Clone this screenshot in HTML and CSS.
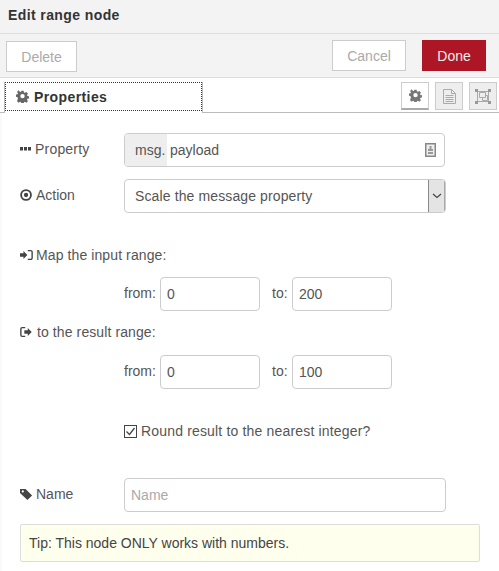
FILE: index.html
```html
<!DOCTYPE html>
<html lang="en">
<head>
<meta charset="utf-8">
<title>Edit range node</title>
<link rel="stylesheet" href="styles.css">
</head>
<body>
<div class="tray">
  <header class="titlebar">Edit range node</header>
  <div class="toolbar">
    <button class="btn btn-delete">Delete</button>
    <div class="toolbar-right">
      <button class="btn btn-cancel">Cancel</button>
      <button class="btn btn-done">Done</button>
    </div>
  </div>
  <div class="tabs">
    <div class="tab">
      <div class="tab-focus">
        <svg class="ico ico-tab" viewBox="0 0 16 16"><path fill="#666" fill-rule="evenodd" d="M6.600 1h2.800l.4 2 1.200.5 1.700-1.100 2 2-1.100 1.700.5 1.200 1.900.3v2.800l-1.900.4-.5 1.200 1.100 1.700-2 2-1.700-1.100-1.200.5-.4 1.900H6.600l-.4-1.900-1.200-.5-1.700 1.100-2-2L2.400 10l-.5-1.200L0 8.400V5.600l1.900-.3.5-1.200-1.100-1.700 2-2L5 2.500l1.200-.5zM8 4.800a2.700 2.700 0 1 0 0 5.400 2.700 2.700 0 0 0 0-5.400z"/></svg>
        <span>Properties</span>
      </div>
    </div>
    <div class="tab-icons">
      <div class="tabicon active">
        <svg class="ico ico-gear" viewBox="0 0 16 16"><path fill="#777" fill-rule="evenodd" d="M6.600 1h2.800l.4 2 1.200.5 1.700-1.100 2 2-1.100 1.700.5 1.200 1.900.3v2.800l-1.900.4-.5 1.200 1.100 1.700-2 2-1.700-1.100-1.200.5-.4 1.900H6.600l-.4-1.900-1.200-.5-1.700 1.100-2-2L2.400 10l-.5-1.200L0 8.400V5.600l1.900-.3.5-1.200-1.100-1.700 2-2L5 2.500l1.200-.5zM8 4.800a2.700 2.700 0 1 0 0 5.400 2.700 2.700 0 0 0 0-5.400z"/></svg>
      </div>
      <div class="tabicon">
        <svg class="ico ico-doc" viewBox="0 0 13 15"><path fill="#eee" stroke="#aaa" d="M.5.500h8l4 4v10H.5z"/><path fill="none" stroke="#aaa" d="M8.500.5v4h4M2.500 6.500h8M2.500 8.500h8M2.500 10.500h8M2.500 12.500h8"/></svg>
      </div>
      <div class="tabicon">
        <svg class="ico ico-focus" viewBox="0 0 16 15"><path fill="none" stroke="#aaa" d="M2.500 2.500h11v10h-11zM4.500 3.500h6v5h-6zM7.500 8.500v3h5v-5h-2"/><path fill="#999" d="M0 0h3v3H0zM13 0h3v3h-3zM0 12h3v3H0zM13 12h3v3h-3z"/></svg>
      </div>
    </div>
  </div>
  <main class="form">
    <div class="row">
      <label class="label label-property">
        <svg class="ico ico-dots" viewBox="0 0 11 4"><path fill="#444" d="M0 0h3v3.500H0zM4 0h3v3.500H4zM8 0h3v3.500H8z"/></svg>
        <span class="spaced">Property</span>
      </label>
      <div class="typed">
        <span class="typed-prefix">msg.</span>
        <span class="typed-value">payload</span>
        <svg class="typed-ico" viewBox="0 0 11 14"><rect x=".75" y=".75" width="9.500" height="12.500" fill="#eee" stroke="#888" stroke-width="1.500"/><path fill="#999" d="M4.500 3h2v3h1.500v2H3V6h1.500zM3 9h5v2H3z"/></svg>
      </div>
    </div>
    <div class="row row-action">
      <label class="label">
        <svg class="ico ico-label" viewBox="0 0 14 14"><circle cx="6.500" cy="7" r="5.300" fill="none" stroke="#444" stroke-width="2"/><circle cx="6.500" cy="7" r="2.300" fill="#444"/></svg>
        <span>Action</span>
      </label>
      <div class="select">
        <span class="select-text">Scale the message property</span>
        <span class="select-arrow"><svg viewBox="0 0 10 6" class="chevron"><path fill="none" stroke="#444" stroke-width="1.200" d="M1 1l4 3.500L9 1"/></svg></span>
      </div>
    </div>
    <div class="heading heading-input">
      <svg class="ico ico-label" viewBox="0 0 15 14"><path fill="#444" d="M0 5h4V2.500L8.500 7 4 11.500V9H0z"/><path fill="none" stroke="#444" stroke-width="1.600" d="M9 2h3.500a1.500 1.500 0 0 1 1.500 1.500v7a1.500 1.500 0 0 1-1.500 1.500H9"/></svg>
      <span>Map the input range:</span>
    </div>
    <div class="range range-input">
      <span class="range-from">from:</span><div class="input input-num">0</div>
      <span class="range-to">to:</span><div class="input input-num">200</div>
    </div>
    <div class="heading heading-result">
      <svg class="ico ico-label" viewBox="0 0 15 14"><path fill="none" stroke="#444" stroke-width="1.600" d="M6 2H2.500A1.500 1.500 0 0 0 1 3.500v7A1.500 1.500 0 0 0 2.500 12H6"/><path fill="#444" d="M5 5h4V2.500L13.500 7 9 11.500V9H5z"/></svg>
      <span>to the result range:</span>
    </div>
    <div class="range range-result">
      <span class="range-from">from:</span><div class="input input-num">0</div>
      <span class="range-to">to:</span><div class="input input-num">100</div>
    </div>
    <div class="check-row">
      <svg class="checkbox" viewBox="0 0 13 13"><rect x=".5" y=".5" width="12" height="12" fill="#fff" stroke="#444"/><path fill="none" stroke="#444" stroke-width="1.300" d="M2.500 6.500l3 3 5-6.500"/></svg>
      <span>Round result to the nearest integer?</span>
    </div>
    <div class="row row-name">
      <label class="label">
        <svg class="ico ico-label" viewBox="0 0 14 14"><path fill="#444" fill-rule="evenodd" d="M0 1.500h6l7 7-5 5-8-7.500zM3 3a1.200 1.200 0 1 0 0 2.400A1.200 1.200 0 0 0 3 3z"/></svg>
        <span>Name</span>
      </label>
      <div class="input input-name">Name</div>
    </div>
    <div class="tip">Tip: This node ONLY works with numbers.</div>
  </main>
</div>
</body>
</html>
```
FILE: styles.css
```css
* { box-sizing: border-box; }
html, body { margin: 0; height: 100%; }
body {
  font-family: "Liberation Sans", Arial, sans-serif;
  font-size: 14px;
  color: #555;
  background: #fff;
  overflow: hidden;
}
.tray { width: 499px; height: 571px; display: flex; flex-direction: column; }

.titlebar {
  height: 34px;
  padding: 7px 8px 0;
  font-weight: bold;
  color: #333;
  letter-spacing: .4px;
  background: #f3f3f3;
  border-bottom: 1px solid #ddd;
  line-height: 16px;
}
.toolbar {
  height: 44px;
  padding: 6px 13px 0 6px;
  display: flex;
  justify-content: space-between;
  align-items: flex-start;
  background: #f3f3f3;
  border-bottom: 1px solid #ddd;
}
.toolbar-right { display: flex; gap: 16px; }
.btn {
  font: inherit;
  height: 31px;
  padding: 0;
  border: 1px solid #ccc;
  background: #fff;
  color: #aaa;
}
.btn-delete { width: 71px; margin-top: 1px; }
.btn-cancel { width: 74px; }
.btn-done { width: 64px; background: #ad1625; border-color: #ad1625; color: #eee; }

.tabs {
  height: 35px;
  padding: 4px 2px 0 4px;
  display: flex;
  justify-content: space-between;
  border-bottom: 1px solid #bbb;
}
.tab {
  width: 199px;
  height: 31px;
  background: #fff;
  border-right: 1px solid #bbb;
  border-left: 1px solid #bbb;
}
.tab-focus {
  height: 29px;
  padding-left: 10px;
  display: flex;
  align-items: center;
  gap: 5px;
  font-weight: bold;
  letter-spacing: .4px;
  color: #333;
  border: 1px dotted #333;
}
.ico { display: block; flex: none; }
.ico-tab { width: 13px; height: 13px; }
.ico-gear { width: 13px; height: 13px; }
.ico-doc { width: 13px; height: 15px; }
.ico-focus { width: 16px; height: 15px; }
.tab-icons { display: flex; gap: 6px; align-items: flex-start; }
.tabicon {
  width: 28px;
  height: 28px;
  display: flex;
  align-items: center;
  justify-content: center;
  background: #eee;
  border: 1px solid #ccc;
}
.tabicon.active { background: #fff; border-bottom: 2px solid #aaa; }

.form {
  flex: 1;
  padding: 20px 0 0 18px;
  display: flex;
  flex-direction: column;
  background: #fff;
  border-left: 2px solid #fafafa;
}
.row { display: flex; align-items: center; }
.label { width: 104px; display: flex; align-items: center; gap: 3px; flex: none; margin-top: -2px; }
.label-property { gap: 4px; }
.spaced { letter-spacing: .2px; }
.ico-label { width: 13px; height: 14px; }
.ico-dots { width: 11px; height: 4px; }

.typed, .select, .input {
  border: 1px solid #ccc;
  border-radius: 4px;
  background: #fff;
}
.typed {
  width: 321px;
  height: 34px;
  display: flex;
  align-items: center;
  overflow: hidden;
}
.typed-prefix {
  width: 42px;
  height: 100%;
  padding-left: 10px;
  display: flex;
  align-items: center;
  background: #eee;
}
.typed-value { flex: 1; padding-left: 3px; }
.typed-ico { width: 11px; height: 14px; margin-right: 8px; }

.row-action { margin-top: 12px; }
.select {
  width: 322px;
  height: 34px;
  display: flex;
  overflow: hidden;
}
.select-text { flex: 1; padding-left: 10px; line-height: 32px; letter-spacing: .12px; }
.select-arrow {
  width: 17px;
  display: flex;
  align-items: center;
  justify-content: center;
  background: #e4e4e4;
  border-left: 1px solid #888;
  border-right: 1px solid #aaa;
}
.chevron { width: 10px; height: 6px; display: block; }

.heading { display: flex; align-items: center; gap: 3px; line-height: 18px; letter-spacing: .1px; }
.heading-input { margin-top: 33px; }
.heading-result { margin-top: 12px; gap: 4px; }
.range { margin-left: 104px; display: flex; align-items: center; height: 34px; }
.range-input { margin-top: 13px; }
.range-result { margin-top: 14px; }
.range-from { width: 32px; margin-right: 4px; margin-top: -2px; flex: none; }
.range-to { width: 16px; margin-left: 12px; margin-right: 4px; margin-top: -2px; flex: none; }
.input-num { width: 100px; height: 34px; line-height: 32px; padding-left: 6px; }

.check-row { margin-top: 33px; margin-left: 104px; display: flex; align-items: center; gap: 4px; line-height: 18px; letter-spacing: .17px; }
.checkbox { width: 13px; height: 13px; display: block; flex: none; }

.row-name { margin-top: 38px; }
.input-name { width: 322px; height: 34px; line-height: 32px; padding-left: 6px; color: #aaa; }
.tip {
  width: 460px;
  height: 38px;
  margin-top: 12px;
  padding-left: 8px;
  line-height: 36px;
  background: #ffe;
  border: 1px solid #ddd;
  border-radius: 2px;
  color: #444;
}
```
